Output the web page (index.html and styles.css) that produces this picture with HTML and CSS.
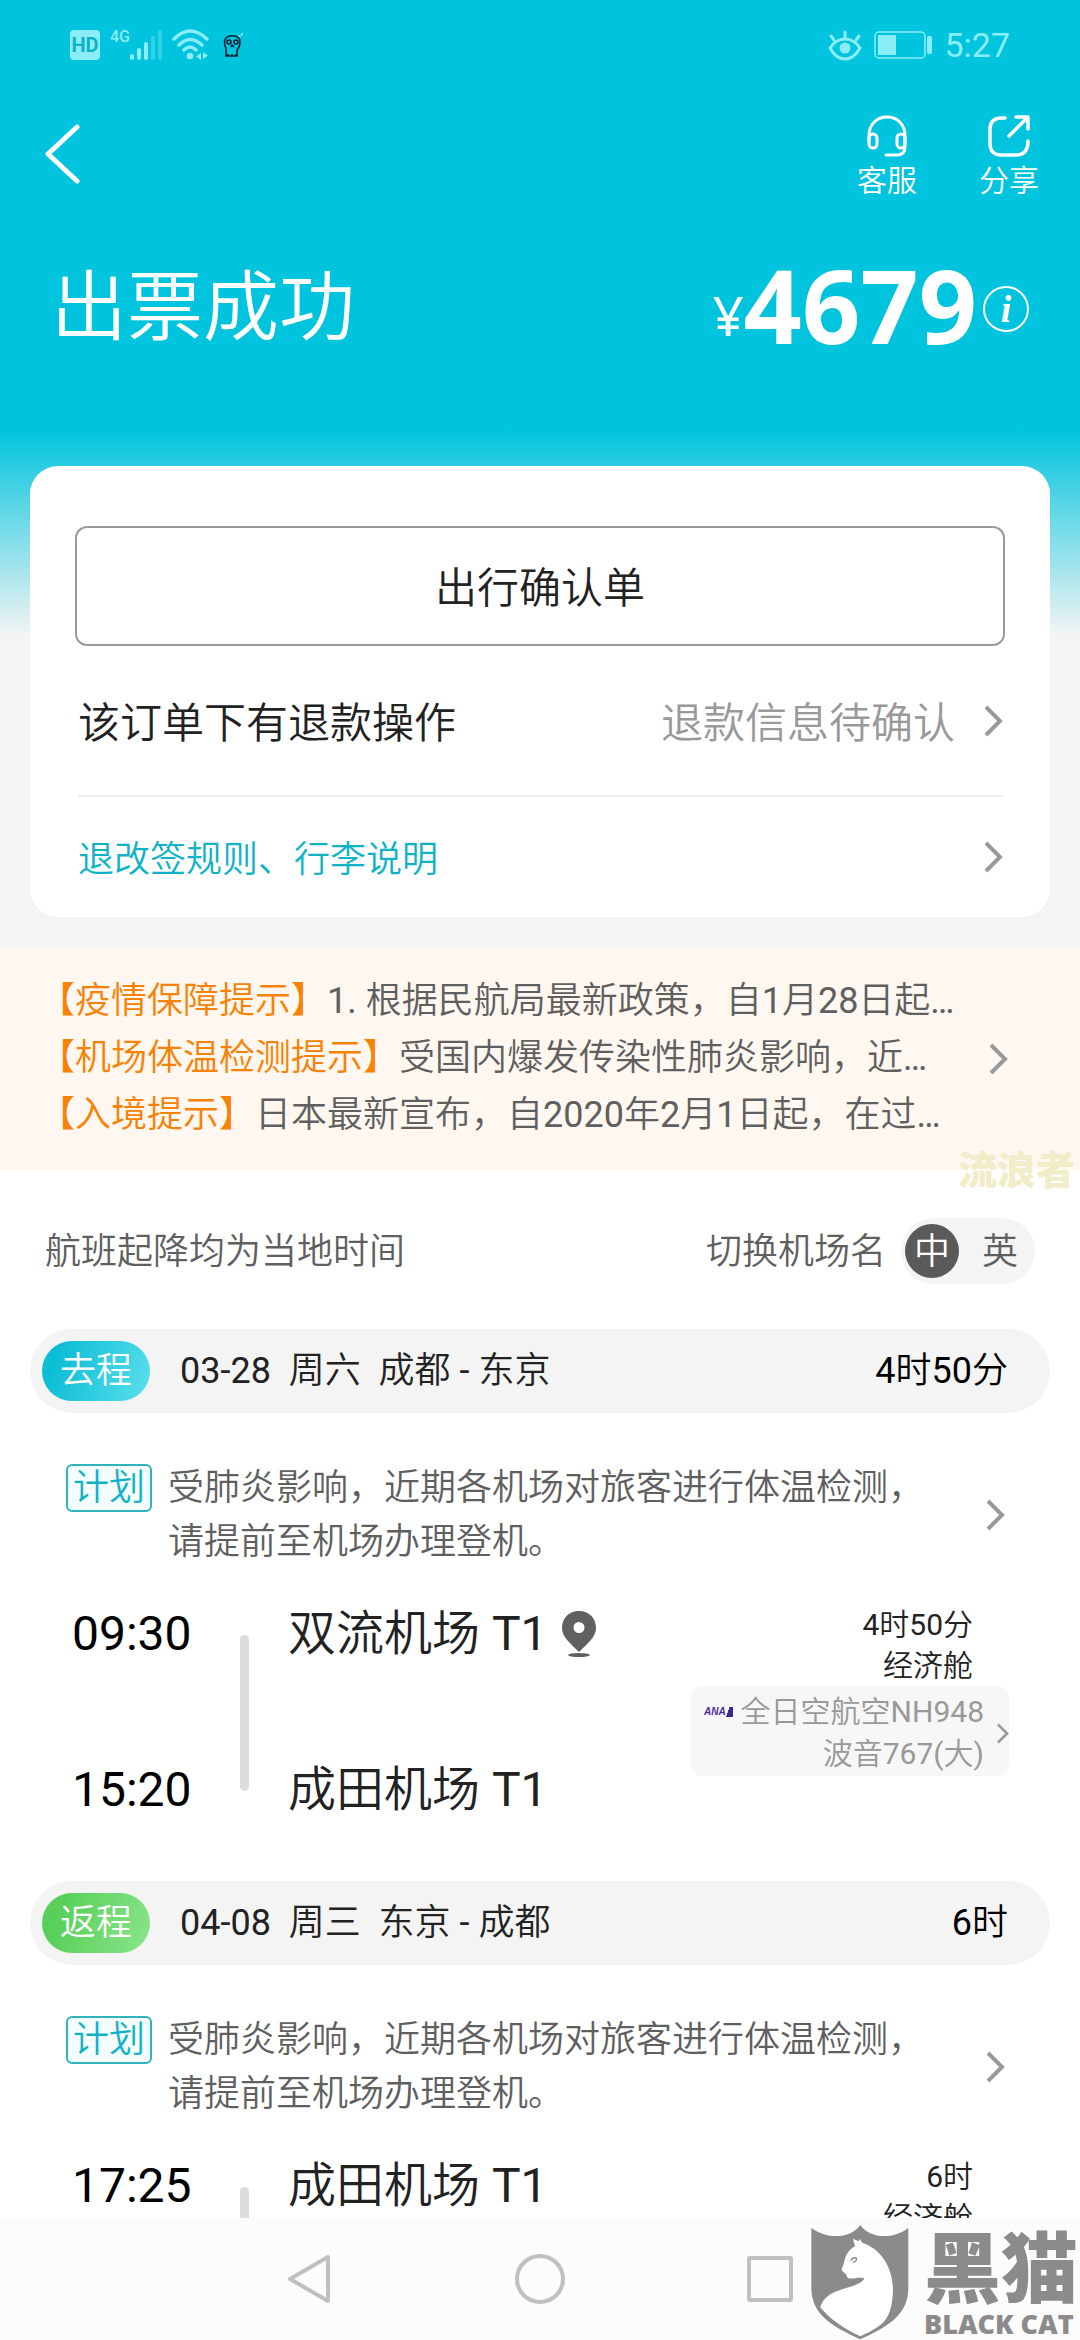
FILE: index.html
```html
<!DOCTYPE html>
<html lang="zh-CN">
<head>
    <meta charset="UTF-8">
    <meta name="viewport" content="width=device-width, initial-scale=1.0">
    <title>出票成功</title>
    <link rel="stylesheet" href="styles.css">
</head>
<body>
    <svg class="symbols" aria-hidden="true">
        <symbol id="chevron" viewBox="0 0 20 32">
            <path d="M3 2 17 16 3 30" fill="none" stroke="currentColor" stroke-width="4"/>
        </symbol>
    </svg>

    <main>
        <div class="order">
            <div class="status-bar">
                <div class="status-left">
                    <span class="hd">HD</span>
                    <span class="net">4G</span>
                    <svg class="signal" width="33" height="32" viewBox="0 0 33 32" fill="currentColor">
                        <rect x="0" y="25" width="4" height="6" rx="2"/>
                        <rect x="7" y="19" width="4" height="12" rx="2"/>
                        <rect x="14" y="13" width="4" height="18" rx="2"/>
                        <rect x="21" y="7" width="4" height="24" rx="2" opacity=".35"/>
                        <rect x="28" y="1" width="4" height="30" rx="2" opacity=".35"/>
                    </svg>
                    <svg class="wifi" width="37" height="32" viewBox="0 0 37 32" fill="none" stroke="currentColor" stroke-width="3.5" stroke-linecap="round">
                        <path d="M2 10Q18 -6 35 10M7 16Q18 5 30 16M12 21Q18 15 24 21"/>
                        <circle cx="18" cy="27" r="3.3" fill="currentColor" stroke="none"/>
                        <path d="M29 24v7l-5-3.500zM31 23v7l5-3.500z" fill="currentColor" stroke="none"/>
                    </svg>
                    <svg class="skull" width="21" height="26" viewBox="0 0 21 26" fill="none" stroke="#123" stroke-width="1.6">
                        <path d="M3 6C1 8 1 14 3 16v8h11v-6c3-3 4-9 2-12C12 3 6 3 3 6z"/>
                        <path d="M5 24v-2M9 24v-2M13 24v-2M8 15l1-2 2 2"/>
                        <circle cx="6" cy="10" r="2"/><circle cx="13" cy="10" r="2"/>
                        <path d="M16 5l4-4" stroke="#cff" stroke-dasharray="2 1"/>
                    </svg>
                </div>
                <div class="status-right">
                    <svg width="34" height="31" viewBox="0 0 34 31" fill="none" stroke="currentColor" stroke-width="3" stroke-linecap="round">
                        <path d="M2 18Q8 9 17 9T32 18Q26 29 17 29T2 18z"/>
                        <path d="M17 2v5M3 6l3 4M31 6l-3 4"/>
                        <circle cx="17" cy="18" r="5.500" fill="currentColor" stroke="none"/>
                    </svg>
                    <svg width="58" height="28" viewBox="0 0 58 28">
                        <rect x="1" y="1" width="50" height="26" rx="4" fill="none" stroke="currentColor" stroke-width="1.500"/>
                        <rect x="4" y="4" width="18" height="20" fill="currentColor"/>
                        <rect x="53" y="5" width="5" height="18" rx="2" fill="currentColor"/>
                    </svg>
                    <span class="clock">5:27</span>
                </div>
            </div>

            <header class="toolbar">
                <button type="button" class="back" aria-label="返回">
                    <svg width="36" height="60" viewBox="0 0 36 60" fill="none" stroke="currentColor" stroke-width="5" stroke-linecap="round" stroke-linejoin="round">
                        <path d="M32 3 3 30 32 57"/>
                    </svg>
                </button>
                <div class="actions">
                    <button type="button">
                        <svg width="42" height="42" viewBox="0 0 42 42" fill="none" stroke="currentColor" stroke-width="3" stroke-linecap="round">
                            <path d="M3 26v-5C3 9 11 2 21 2s18 7 18 19v11c0 6-3 8-8 8H20"/>
                            <rect x="3" y="19" width="8" height="14" rx="4"/>
                            <rect x="31" y="19" width="8" height="14" rx="4"/>
                        </svg>
                        客服
                    </button>
                    <button type="button">
                        <svg width="42" height="42" viewBox="0 0 42 42" fill="none" stroke="currentColor" stroke-width="3.500" stroke-linecap="round" stroke-linejoin="round">
                            <path d="M17 3h-3C6 3 2 7 2 14v15c0 7 4 11 11 11h15c7 0 12-4 12-14"/>
                            <path d="M28 2h12v12M39 3 21 21"/>
                        </svg>
                        分享
                    </button>
                </div>
            </header>

            <div class="headline">
                <h1>出票成功</h1>
                <div class="price">
                    <span class="currency">¥</span>
                    <span class="amount">4679</span>
                    <button type="button" class="info" aria-label="价格说明">i</button>
                </div>
            </div>

            <section class="card">
                <button type="button" class="confirm">出行确认单</button>
                <a href="#refund" class="card-row refund">
                    <span>该订单下有退款操作</span>
                    <span class="state">退款信息待确认</span>
                    <svg class="arrow"><use href="#chevron"/></svg>
                </a>
                <a href="#rules" class="card-row rules">
                    <span>退改签规则、行李说明</span>
                    <svg class="arrow"><use href="#chevron"/></svg>
                </a>
            </section>
        </div>

        <section class="notice">
            <a href="#notice">
                <span class="lines">
                    <span><b>【疫情保障提示】</b>1. 根据民航局最新政策，自1月28日起…</span>
                    <span><b>【机场体温检测提示】</b>受国内爆发传染性肺炎影响，近…</span>
                    <span><b>【入境提示】</b>日本最新宣布，自2020年2月1日起，在过…</span>
                </span>
                <svg class="arrow"><use href="#chevron"/></svg>
            </a>
            <span class="user-mark">流浪者</span>
        </section>

        <div class="switch-row">
            <span>航班起降均为当地时间</span>
            <div class="switch" role="radiogroup" aria-labelledby="switch-label">
                <span id="switch-label">切换机场名</span>
                <div class="toggle">
                    <input type="radio" name="lang" id="lang-zh" checked>
                    <label for="lang-zh">中</label>
                    <input type="radio" name="lang" id="lang-en">
                    <label for="lang-en">英</label>
                </div>
            </div>
        </div>

        <section class="trip">
            <div class="trip-bar">
                <span class="badge go">去程</span>
                <h2>03-28&nbsp; 周六&nbsp; 成都 - 东京</h2>
                <span class="duration">4时50分</span>
            </div>
            <a href="#plan" class="plan">
                <span class="tag">计划</span>
                <span class="plan-text">受肺炎影响，近期各机场对旅客进行体温检测，<br>请提前至机场办理登机。</span>
                <svg class="arrow"><use href="#chevron"/></svg>
            </a>
            <div class="flight">
                <div class="times"><span>09:30</span><span>15:20</span></div>
                <div class="track"></div>
                <div class="places">
                    <span>双流机场 T1
                        <svg class="pin" width="34" height="46" viewBox="0 0 34 46" fill="#606060">
                            <path fill-rule="evenodd" d="M17 0C7 0 0 7 0 17c0 9 8 15 17 24 9-9 17-15 17-24C34 7 27 0 17 0zm0 11a5.500 5.500 0 1 1 0 11 5.500 5.500 0 0 1 0-11z"/>
                            <ellipse cx="17" cy="44" rx="11" ry="2"/>
                        </svg>
                    </span>
                    <span>成田机场 T1</span>
                </div>
                <div class="detail">
                    <span class="meta">4时50分</span>
                    <span class="meta">经济舱</span>
                    <a href="#plane" class="plane">
                        <span class="plane-text">
                            <span class="airline"><i class="ana">ANA</i>全日空航空NH948</span>
                            <span>波音767(大)</span>
                        </span>
                        <svg class="arrow small"><use href="#chevron"/></svg>
                    </a>
                </div>
            </div>
        </section>

        <section class="trip">
            <div class="trip-bar">
                <span class="badge return">返程</span>
                <h2>04-08&nbsp; 周三&nbsp; 东京 - 成都</h2>
                <span class="duration">6时</span>
            </div>
            <a href="#plan" class="plan">
                <span class="tag">计划</span>
                <span class="plan-text">受肺炎影响，近期各机场对旅客进行体温检测，<br>请提前至机场办理登机。</span>
                <svg class="arrow"><use href="#chevron"/></svg>
            </a>
            <div class="flight">
                <div class="times"><span>17:25</span></div>
                <div class="track"></div>
                <div class="places"><span>成田机场 T1</span></div>
                <div class="detail">
                    <span class="meta">6时</span>
                    <span class="meta">经济舱</span>
                </div>
            </div>
        </section>
    </main>

    <nav class="system-nav">
        <button type="button" aria-label="返回">
            <svg width="52" height="52" viewBox="0 0 52 52"><path d="M44 4v44L6 26z"/></svg>
        </button>
        <button type="button" aria-label="主页">
            <svg width="52" height="52" viewBox="0 0 52 52"><circle cx="26" cy="26" r="23"/></svg>
        </button>
        <button type="button" aria-label="最近任务">
            <svg width="52" height="52" viewBox="0 0 52 52"><rect x="5" y="5" width="42" height="42" rx="1"/></svg>
        </button>
        <div class="black-cat">
            <svg width="98" height="115" viewBox="92 75 294 345">
                <path fill="#8c8a8b" d="M93 83C138 118 210 118 240 75C270 118 342 118 384 83V265C384 345 320 382 240 418C160 382 93 345 93 265z"/>
                <path fill="#fff" d="M218 116 235 124 238 117 246 128C300 146 338 200 338 272C336 318 328 350 303 373C284 388 262 400 240 409C190 387 143 352 120 322C135 270 200 268 230 253C243 247 251 240 252 235C235 230 217 238 205 235C198 231 200 228 196 222C189 216 182 212 184 207C196 190 187 160 224 139z"/>
                <path fill="none" stroke="#8c8a8b" stroke-width="4" d="M211 182C215 174 222 172 228 174C230 180 226 187 217 187"/>
            </svg>
            <div class="cat-name"><strong>黑猫</strong><span>BLACK CAT</span></div>
        </div>
    </nav>
</body>
</html>
```
FILE: styles.css
```css
* {
    box-sizing: border-box;
}
body {
    display: flex;
    flex-direction: column;
    height: 100vh;
    margin: 0;
    overflow: hidden;
    background: #fff;
    color: #222;
    font-family: Roboto, "Noto Sans CJK SC DemiLight", "Noto Sans CJK SC", sans-serif;
    font-size: 36px;
    font-weight: 400;
    line-height: 54px;
}
main {
    flex: 1;
    min-height: 0;
    overflow: hidden;
}
button {
    padding: 0;
    border: 0;
    background: none;
    color: inherit;
    font: inherit;
}
a {
    color: inherit;
    text-decoration: none;
}
svg {
    display: block;
    flex: none;
}
.symbols {
    position: absolute;
    width: 0;
    height: 0;
}
.arrow {
    width: 20px;
    height: 32px;
    color: #999;
}
.arrow.small {
    width: 13px;
    height: 21px;
}

/* order summary */
.order {
    padding-bottom: 31px;
    background: linear-gradient(#00c4de 430px, #f4f4f4 636px);
}
.status-bar {
    display: flex;
    justify-content: space-between;
    align-items: center;
    height: 90px;
    padding: 0 70px;
    color: #8cecf7;
}
.status-left, .status-right {
    display: flex;
    align-items: center;
}
.status-right {
    gap: 12px;
}
.hd {
    width: 30px;
    border-radius: 4px;
    background: #8cecf7;
    color: #0cb2c8;
    font-size: 20px;
    font-weight: 700;
    line-height: 30px;
    text-align: center;
}
.net {
    align-self: flex-start;
    margin-left: 10px;
    font-size: 16px;
    font-weight: 500;
    line-height: 16px;
}
.wifi {
    margin-left: 9px;
}
.skull {
    margin-left: 14px;
}
.clock {
    font-size: 34px;
    line-height: 52px;
}
.toolbar {
    display: flex;
    justify-content: space-between;
    align-items: flex-start;
    padding: 25px 41px 0 45px;
    color: #fff;
}
.back {
    height: 78px;
}
.actions {
    display: flex;
    gap: 62px;
}
.actions button {
    display: flex;
    flex-direction: column;
    align-items: center;
    gap: 6px;
    font-size: 30px;
    line-height: 36px;
}
.headline {
    display: flex;
    justify-content: space-between;
    height: 211px;
    padding: 0 51px;
    margin-top: 56px;
    color: #fff;
}
h1 {
    margin: 0;
    font-size: 76px;
    font-weight: 400;
    line-height: 106px;
}
.price {
    display: flex;
    align-items: center;
    height: 100px;
    font-family: "Noto Sans", sans-serif;
}
.currency {
    align-self: flex-end;
    font-size: 54px;
    line-height: 80px;
}
.amount {
    font-size: 102px;
    font-weight: 700;
    line-height: 100px;
}
.info {
    width: 46px;
    height: 46px;
    margin: 8px 0 0 6px;
    border: 2px solid #fff;
    border-radius: 50%;
    font-family: "Liberation Serif", serif;
    font-size: 38px;
    font-style: italic;
    font-weight: 700;
    line-height: 40px;
}
.card {
    margin: 0 30px;
    padding: 60px 45px 0;
    border-radius: 28px;
    background: #fff;
}
.confirm {
    display: block;
    width: 100%;
    height: 120px;
    padding-top: 6px;
    border: 2px solid #999;
    border-radius: 12px;
    font-size: 42px;
}
.card-row {
    display: flex;
    justify-content: space-between;
    align-items: center;
    height: 120px;
    margin: 0 2px 0 3px;
}
.card-row span {
    padding-top: 6px;
}
.refund {
    height: 151px;
    border-bottom: 2px solid #eee;
    font-size: 42px;
}
.state {
    margin-left: auto;
    margin-right: 28px;
    color: #999;
}
.rules {
    color: #10b3c6;
}

/* travel notices */
.notice {
    position: relative;
    padding: 25px 72px 26px 39px;
    background: #fff7f0;
}
.notice a {
    display: flex;
    justify-content: space-between;
    align-items: center;
}
.lines {
    color: #5f5f5f;
    line-height: 57px;
    white-space: nowrap;
}
.lines span {
    display: block;
}
.lines b {
    color: #f78205;
    font-weight: 400;
}
.user-mark {
    position: absolute;
    right: 5px;
    bottom: -24px;
    color: #f1edc9;
    font-family: "Noto Sans CJK SC", sans-serif;
    font-size: 39px;
    font-weight: 900;
}

.switch-row {
    display: flex;
    justify-content: space-between;
    align-items: center;
    padding: 48px 45px 45px;
    color: #5f5f5f;
}
.switch-row span, .toggle label {
    padding-top: 2px;
}
.switch {
    display: flex;
    align-items: center;
    gap: 15px;
}
.toggle {
    display: flex;
    align-items: center;
    gap: 14px;
    height: 66px;
    padding: 0 8px 0 4px;
    border-radius: 33px;
    background: #f4f4f4;
}
.toggle input {
    position: absolute;
    opacity: 0;
}
.toggle label {
    width: 54px;
    border-radius: 50%;
    line-height: 52px;
    text-align: center;
}
.toggle input:checked + label {
    background: #5a5a5a;
    color: #fff;
}

/* flights */
.trip-bar {
    display: flex;
    align-items: center;
    height: 84px;
    margin: 0 30px;
    padding: 0 42px 0 12px;
    border-radius: 42px;
    background: #f4f4f4;
}
.badge {
    width: 108px;
    margin-right: 30px;
    border-radius: 30px;
    color: #fff;
    line-height: 60px;
    text-align: center;
}
.go {
    background: linear-gradient(110deg, #0cbdd6 15%, #5ce0ec);
}
.return {
    background: linear-gradient(110deg, #57cf59 15%, #8ae58b);
}
h2 {
    margin: 0;
    font-size: 36px;
    font-weight: 400;
}
.duration {
    margin-left: auto;
    color: #000;
}
.plan {
    display: flex;
    align-items: center;
    padding: 48px 75px 35px 66px;
    color: #5f5f5f;
}
.tag {
    align-self: flex-start;
    width: 86px;
    margin: 3px 16px 0 0;
    border: 2px solid #2fb3bd;
    border-radius: 6px;
    background: #f5feff;
    color: #10b3c6;
    line-height: 44px;
    text-align: center;
}
.plan .arrow {
    margin-left: auto;
}
.flight {
    display: flex;
    height: 277px;
    padding: 0 71px 61px 72px;
    line-height: 60px;
}
.times, .places {
    display: flex;
    flex-direction: column;
    justify-content: space-between;
    font-size: 48px;
}
.times {
    width: 168px;
    color: #000;
}
.track {
    width: 9px;
    margin: 31px 39px 29px 0;
    border-radius: 5px;
    background: #ddd;
}
.places span {
    display: flex;
    align-items: center;
    gap: 14px;
}
.detail {
    display: flex;
    flex-direction: column;
    align-items: flex-end;
    margin-left: auto;
    font-size: 30px;
    line-height: 42px;
}
.meta {
    height: 41px;
    margin-right: 36px;
}
.plane {
    display: flex;
    align-items: center;
    gap: 12px;
    padding: 5px 0 1px 13px;
    border-radius: 12px;
    background: #f7f7f7;
    color: #999;
    text-align: right;
}
.plane-text span {
    display: block;
}
.plane-text .airline {
    display: flex;
    align-items: center;
    gap: 8px;
}
.ana {
    padding-right: 7px;
    background: linear-gradient(110deg, transparent 78%, #3a2a8c 79%) no-repeat;
    color: #4b2a9c;
    font-family: "Liberation Sans", sans-serif;
    font-size: 10px;
    font-weight: 700;
    line-height: 10px;
}

/* system navigation */
.system-nav {
    position: relative;
    display: flex;
    justify-content: center;
    align-items: center;
    gap: 178px;
    height: 122px;
    background: #fcfcfc;
}
.system-nav button svg {
    fill: none;
    stroke: #c0c0c0;
    stroke-width: 4;
    stroke-linejoin: round;
}
.black-cat {
    position: absolute;
    right: 2px;
    bottom: 0;
    display: flex;
    gap: 15px;
    color: #8c8a8b;
}
.cat-name {
    display: flex;
    flex-direction: column;
    font-family: "Open Sans", "Noto Sans CJK SC", sans-serif;
    font-weight: 800;
}
.cat-name strong {
    font-size: 77px;
    font-weight: 900;
    line-height: 86px;
}
.cat-name span {
    font-size: 27px;
    line-height: 26px;
}
```
